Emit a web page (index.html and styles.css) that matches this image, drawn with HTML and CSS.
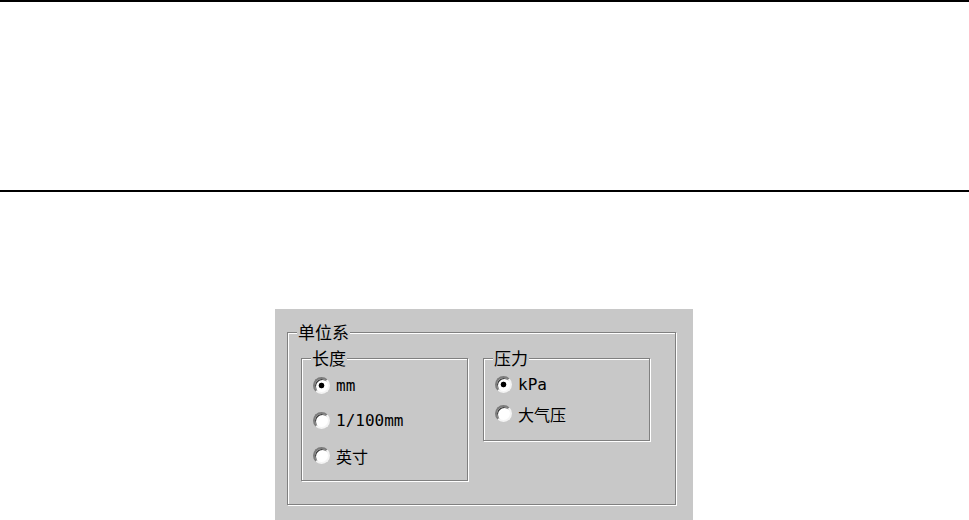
FILE: index.html
```html
<!doctype html>
<html>
<head>
    <meta charset="utf-8">
    <title>单位系</title>
    <link rel="stylesheet" href="styles.css">
</head>
<body>
	<div class="rule"></div>
	<div class="band"></div>
	<div class="rule"></div>
	<div class="stage">
		<div class="panel">
			<fieldset class="group outer">
				<legend>单位系</legend>
				<div class="group-body">
					<fieldset class="group len">
						<legend>长度</legend>
						<div class="opts">
							<label class="opt"><span class="radio on"></span>mm</label>
							<label class="opt"><span class="radio"></span>1/100mm</label>
							<label class="opt"><span class="radio"></span>英寸</label>
						</div>
					</fieldset>
					<fieldset class="group prs">
						<legend>压力</legend>
						<div class="opts tight">
							<label class="opt"><span class="radio on"></span>kPa</label>
							<label class="opt"><span class="radio"></span>大气压</label>
						</div>
					</fieldset>
				</div>
			</fieldset>
		</div>
	</div>
</body>
</html>
```

FILE: styles.css
```css
*{margin:0; padding:0;}
body{background:#fff; font-family:"Noto Sans CJK SC", sans-serif; color:#000;}
.rule{height:2px; background:#000;}
.band{height:188px;}
.stage{padding-top:117px;}
.panel{margin-left:275px; width:418px; height:211px; background:#c8c8c8; padding:14px 0 0 12px; box-sizing:border-box; overflow:hidden;}

.group{border:1px solid #808080; box-shadow:1px 1px 0 #fff, inset 1px 1px 0 #fff; min-width:0; box-sizing:border-box;}
.group legend{margin-left:9px; padding:0 1px; background:#c8c8c8; font-size:17px; line-height:18px; font-family:"Noto Sans CJK SC", sans-serif;}
.outer{width:389px; height:182px;}
.group-body{display:flex; align-items:flex-start; gap:15px; padding:8px 0 0 13px;}
.len{width:167px; height:132px;}
.prs{width:167px; height:92px;}

.opts{padding:1px 0 0 11px;}
.opts.tight{padding-top:3px;}
.opt{display:flex; align-items:center; gap:6px; height:35px; font-family:"DejaVu Sans Mono", "Noto Sans CJK SC", monospace; font-size:16px;}
.tight .opt{height:29px;}
.radio{width:17px; height:17px; box-sizing:border-box; border-radius:50%; border:2px solid; border-color:#7c7c7c #f4f4f4 #f4f4f4 #7c7c7c; background:#fff; box-shadow:inset 1px 1px 0 #3a3a3a;}
.radio.on{background:radial-gradient(circle, #000 0 2.5px, #fff 3.2px);}
```
